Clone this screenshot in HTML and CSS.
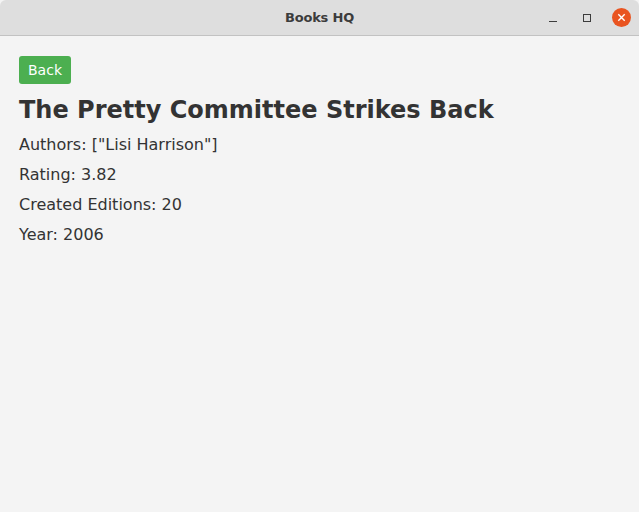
FILE: index.html
```html
<!DOCTYPE html>
<html>
<head>
<meta charset="utf-8">
<link rel="stylesheet" href="styles.css">
</head>
<body>
<div class="window">
  <div class="titlebar">
    <div class="title">Books HQ</div>
    <div class="controls">
      <span class="ctl min"><svg width="8" height="8" viewBox="0 0 8 8"><path d="M0 7.5H8" stroke="#3c3c3c" stroke-width="1"/></svg></span>
      <span class="ctl max"><svg width="8" height="8" viewBox="0 0 8 8"><rect x="0.5" y="0.5" width="7" height="7" fill="none" stroke="#3c3c3c" stroke-width="1"/></svg></span>
      <span class="ctl close"><svg width="19" height="19" viewBox="0 0 19 19"><circle cx="9.5" cy="9.5" r="9.5" fill="#e95420"/><path d="M6.3 6.3L12.7 12.7M12.7 6.3L6.3 12.7" stroke="#fff" stroke-width="1.4"/></svg></span>
    </div>
  </div>
  <div class="content">
    <button class="back">Back</button>
    <h1 class="book-title">The Pretty Committee Strikes Back</h1>
    <p class="field">Authors: ["Lisi Harrison"]</p>
    <p class="field">Rating: 3.82</p>
    <p class="field">Created Editions: 20</p>
    <p class="field">Year: 2006</p>
  </div>
</div>
</body>
</html>
```
FILE: styles.css
```css
html, body {
  margin: 0;
  padding: 0;
  background: #f4f4f4;
}
.window {
  width: 639px;
  height: 512px;
  display: flex;
  flex-direction: column;
  font-family: "DejaVu Sans", sans-serif;
  color: #333333;
}
.titlebar {
  height: 35px;
  background: #dedede;
  border-bottom: 1px solid #c2c2c2;
  position: relative;
  display: flex;
  align-items: center;
  justify-content: center;
  border-radius: 6px 6px 0 0;
}
.title {
  font-family: "DejaVu Sans", sans-serif;
  font-weight: bold;
  font-size: 13px;
  color: #3c3c3c;
  letter-spacing: -0.2px;
}
.controls {
  position: absolute;
  right: 8px;
  top: 8px;
  height: 19px;
  display: flex;
  align-items: center;
}
.ctl {
  display: flex;
  align-items: center;
  justify-content: center;
}
.ctl svg { display: block; }
.ctl.min { width: 8px; margin-right: 26px; }
.ctl.max { width: 8px; margin-right: 21px; }
.ctl.close { width: 19px; }
.content {
  padding: 20px 19px;
  display: flex;
  flex-direction: column;
  align-items: flex-start;
}
.back {
  background: #4caf50;
  color: #ffffff;
  border: none;
  border-radius: 3px;
  font-family: "DejaVu Sans", sans-serif;
  font-size: 14px;
  height: 28px;
  padding: 0 9px;
  margin: 0;
}
.book-title {
  font-size: 24px;
  font-weight: bold;
  margin: 10px 0 9px 0;
  line-height: 32px;
  color: #333333;
}
.field {
  font-size: 16px;
  margin: 0 0 11px 0;
  line-height: 19px;
  color: #333333;
}
```
